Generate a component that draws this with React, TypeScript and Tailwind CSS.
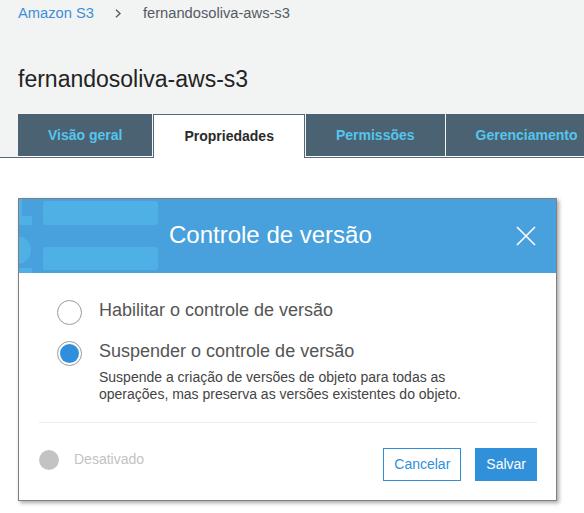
import { useState } from 'react';

const tabs = ['Visão geral', 'Propriedades', 'Permissões', 'Gerenciamento'];

const HeaderDecor = (): JSX.Element => (
  <svg
    className="pointer-events-none absolute left-0 top-0"
    width="140"
    height="74"
    viewBox="0 0 140 74"
    fill="#4fb0e5"
  >
    <rect x="24" y="2" width="115" height="24" rx="3" />
    <rect x="24" y="48" width="115" height="23" rx="3" />
    <rect x="0" y="0" width="3" height="17" />
    <rect x="0" y="17" width="13" height="9" />
    <circle cx="-2" cy="51" r="14" />
    <rect x="0" y="69" width="13" height="6" />
  </svg>
);

const Radio = ({ checked }: { checked: boolean }): JSX.Element => (
  <span
    className={
      checked
        ? 'box-border flex h-[25px] w-[25px] shrink-0 items-center justify-center rounded-full border border-[#9a9a9a] bg-white p-[2px]'
        : 'box-border flex h-[25px] w-[25px] shrink-0 rounded-full border border-[#9a9a9a] bg-white'
    }
  >
    {checked && <span className="h-full w-full rounded-full bg-[#2f8fdc]" />}
  </span>
);

export default function App(): JSX.Element {
  const [mode, setMode] = useState<'enable' | 'suspend'>('suspend');

  return (
    <div className="min-h-screen bg-white font-['Liberation_Sans',Arial,sans-serif]">
      <div className="bg-[#f2f3f3]">
        <nav className="flex h-[26px] items-center pl-[18px] text-[14.7px]">
          <span className="text-[#3e8fd8]">Amazon S3</span>
          <svg width="6" height="9" viewBox="0 0 6 9" className="ml-[21px]">
            <path d="M1 0.8L5 4.5L1 8.2" fill="none" stroke="#545b64" strokeWidth="1.4" />
          </svg>
          <span className="ml-[22px] text-[#545b64]">fernandosoliva-aws-s3</span>
        </nav>
        <h1 className="mt-[39px] pl-[18px] text-[23px] leading-[28px] text-[#232323]">
          fernandosoliva-aws-s3
        </h1>
        <div className="mt-[21px] flex border-b border-[#56697a] pl-[18px]">
          {tabs.map((t) =>
            t === 'Propriedades' ? (
              <div
                key={t}
                className="-mb-px mr-px flex h-[44px] items-center border-x border-t border-[#56697a] bg-white px-[30px] pb-px text-[14px] font-bold text-[#2a2a2a]"
              >
                {t}
              </div>
            ) : (
              <div
                key={t}
                className="mr-px flex h-[43px] items-center border-b border-white bg-[#4b6272] px-[30px] text-[14px] font-bold whitespace-nowrap text-[#56c5ee]"
              >
                {t}
              </div>
            ),
          )}
        </div>
      </div>

      <div className="ml-[18px] mt-[40px] w-[539px] border border-[#808080] bg-white shadow-[2px_2px_4px_rgba(0,0,0,0.35)]">
        <div className="relative flex h-[74px] items-center justify-between overflow-hidden bg-[#48a1dc] pl-[150px] pr-[20px]">
          <HeaderDecor />
          <h2 className="relative mb-[3px] text-[24px] text-white">Controle de versão</h2>
          <svg width="20" height="20" viewBox="0 0 20 20" className="relative">
            <path d="M1 1L19 19M19 1L1 19" stroke="white" strokeWidth="1.6" />
          </svg>
        </div>

        <div className="pl-[38px] pt-[27px]">
          <label className="flex cursor-pointer items-start gap-[17px]" onClick={() => setMode('enable')}>
            <Radio checked={mode === 'enable'} />
            <span className="text-[18px] leading-[21px] text-[#555]">Habilitar o controle de versão</span>
          </label>
          <label className="mt-[16px] flex cursor-pointer items-start gap-[17px]" onClick={() => setMode('suspend')}>
            <Radio checked={mode === 'suspend'} />
            <span className="text-[18px] leading-[21px] text-[#555]">Suspender o controle de versão</span>
          </label>
          <p className="mt-[3px] pl-[42px] text-[14px] leading-[17px] text-[#444]">
            Suspende a criação de versões de objeto para todas as
            <br />
            operações, mas preserva as versões existentes do objeto.
          </p>
        </div>

        <div className="pl-[20px] pr-[19px]">
          <div className="mt-[19px] h-px bg-[#eaeded]" />
          <div className="flex items-start justify-between pb-[19px] pt-[25px]">
            <div className="mt-[1px] flex items-center gap-[15px]">
              <span className="h-[20px] w-[20px] rounded-full bg-[#c2c4c4]" />
              <span className="text-[14px] text-[#c3c3c3]">Desativado</span>
            </div>
            <div className="flex gap-[14px]">
              <button className="h-[33px] border border-[#2f8fdc] bg-white px-[10px] text-[14px] text-[#2f8fdc]">
                Cancelar
              </button>
              <button className="h-[33px] border border-[#3090d9] bg-[#3090d9] px-[10px] text-[14px] text-white">
                Salvar
              </button>
            </div>
          </div>
        </div>
      </div>
    </div>
  );
}
